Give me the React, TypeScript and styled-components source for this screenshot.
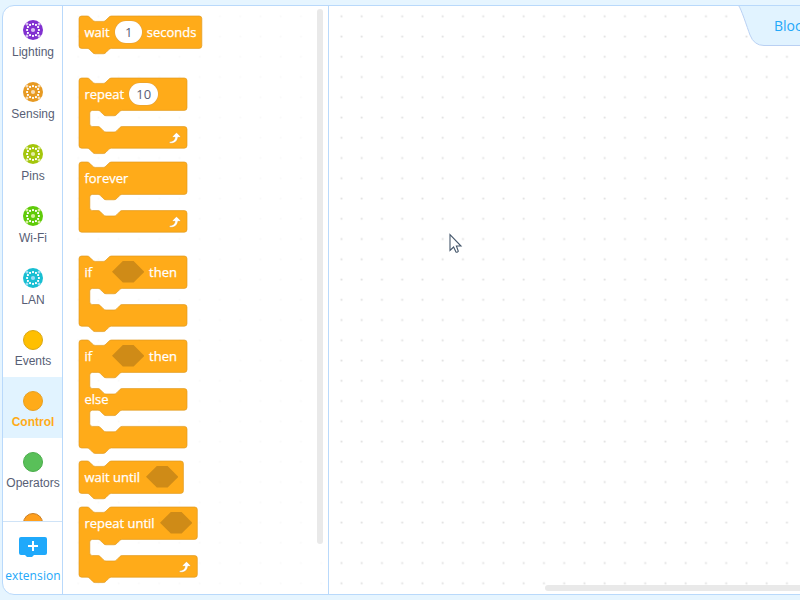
import React from 'react';
import styled, { createGlobalStyle } from 'styled-components';

const GlobalStyle = createGlobalStyle`
  * { box-sizing: border-box; }
  body { margin: 0; overflow: hidden; background: #e6f5ff; font-family: "Liberation Sans", Arial, sans-serif; }
`;

const Page = styled.div`
  width: 800px;
  height: 600px;
  padding: 5px 0 5px 2px;
  overflow: hidden;
`;

const Editor = styled.div`
  position: relative;
  display: flex;
  width: 820px;
  height: 590px;
  border: 1px solid #b9d9fb;
  border-radius: 12px;
  background: #fff;
  overflow: hidden;
`;

const Sidebar = styled.nav`
  display: flex;
  flex-direction: column;
  width: 60px;
  height: 588px;
  border-right: 1px solid #b9d9fb;
`;

const CategoryList = styled.div`
  height: 515px;
  overflow: hidden;
`;

const Category = styled.div<{ $active?: boolean; $height: number }>`
  display: flex;
  flex-direction: column;
  align-items: center;
  height: ${(p) => p.$height}px;
  padding: 14px 0 0 1px;
  font-size: 12px;
  line-height: 14px;
  white-space: nowrap;
  color: ${(p) => (p.$active ? '#ffab19' : '#575e75')};
  font-weight: ${(p) => (p.$active ? 700 : 400)};
  background: ${(p) => (p.$active ? '#e1f3ff' : 'transparent')};
`;

const Dot = styled.span<{ $color: string; $edge: string }>`
  width: 20px;
  height: 20px;
  border-radius: 50%;
  border: 1px solid ${(p) => p.$edge};
  background: ${(p) => p.$color};
`;

const CategoryLabel = styled.span<{ $top: number }>`
  margin-top: ${(p) => p.$top}px;
`;

const Extension = styled.div`
  display: flex;
  flex: 1;
  flex-direction: column;
  align-items: center;
  padding: 15px 0 0 1px;
  border-top: 1px solid #cfe3f7;
  color: #23a8f9;
  font: 12px/16px "Open Sans", "Noto Sans", sans-serif;
  letter-spacing: 0.1px;
`;

const ExtensionLabel = styled.span`
  margin-top: 11px;
`;

const Stage = styled.div`
  position: relative;
  display: flex;
  flex: 1;
`;

const DotGrid = styled.svg`
  position: absolute;
  inset: 0;
  width: 100%;
  height: 100%;
`;

const Palette = styled.section`
  position: relative;
  display: flex;
  flex-direction: column;
  align-items: flex-start;
  width: 266px;
  height: 588px;
  padding: 10px 0 0 16px;
  border-right: 1px solid #b9d9fb;
  background: rgba(255, 255, 255, 0.8);
`;

const BlockBox = styled.div<{ $gap: number; $width: number; $height: number }>`
  position: relative;
  flex: none;
  width: ${(p) => p.$width}px;
  height: ${(p) => p.$height}px;
  margin-bottom: ${(p) => p.$gap}px;
  color: #fff;
  font: 500 13px/18px "Open Sans", "Noto Sans", sans-serif;
`;

const Shape = styled.svg`
  position: absolute;
  left: 0;
  top: 0;
  overflow: visible;
`;

const BlockRow = styled.div`
  position: relative;
  display: flex;
  align-items: center;
  height: 32px;
  padding-left: 5.4px;
  white-space: nowrap;
`;

const Word = styled.span<{ $width?: number }>`
  flex: none;
  width: ${(p) => (p.$width ? `${p.$width}px` : 'auto')};
  -webkit-text-stroke: 0.25px #fff;
`;

const NumberField = styled.span<{ $width: number }>`
  display: flex;
  align-items: center;
  justify-content: center;
  flex: none;
  width: ${(p) => p.$width}px;
  height: 21.6px;
  margin-right: 4.8px;
  border-radius: 11px;
  box-shadow: 0 0 0 0.5px #e2a03a;
  background: #fff;
  color: #575e75;
  font-weight: 400;
`;

const HexSlot = styled.svg`
  flex: none;
  margin-right: 4.9px;
`;

const ElseRow = styled.div`
  position: relative;
  height: 21.6px;
  margin-top: 16.2px;
  padding: 1.6px 0 0 5.4px;
`;

const LoopArrow = styled.svg`
  position: absolute;
  right: 5px;
  bottom: 3px;
`;

const PaletteScroll = styled.div`
  position: absolute;
  right: 5px;
  top: 3px;
  width: 6px;
  height: 535px;
  border-radius: 3px;
  background: #e9e9e9;
`;

const Workspace = styled.main`
  position: relative;
  flex: 1;
`;

const WorkspaceScroll = styled.div`
  position: absolute;
  left: 216px;
  bottom: 3px;
  width: 300px;
  height: 6px;
  border-radius: 3px;
  background: #e9e9e9;
`;

const TabShape = styled.svg`
  position: absolute;
  left: 409px;
  top: -1px;
`;

const TabLabel = styled.span`
  position: absolute;
  left: 445px;
  top: 10px;
  color: #23a8f9;
  font: 14px/20px "Open Sans", "Noto Sans", sans-serif;
  white-space: nowrap;
`;

const Cursor = styled.svg`
  position: absolute;
  left: 120px;
  top: 227px;
`;

type Wheel = { label: string; color: string; tint: string };

const wheels: Wheel[] = [
  { label: 'Lighting', color: '#8130d0', tint: '#d9c0f0' },
  { label: 'Sensing', color: '#e79a22', tint: '#f8dcb5' },
  { label: 'Pins', color: '#a4c60c', tint: '#e2eda6' },
  { label: 'Wi-Fi', color: '#5fcb09', tint: '#d5ee9d' },
  { label: 'LAN', color: '#18bfd2', tint: '#9ddcf5' },
];

const discs = [
  { label: 'Events', color: '#ffbf00', edge: '#daa715' },
  { label: 'Control', color: '#ffab19', edge: '#e7a022' },
  { label: 'Operators', color: '#59c059', edge: '#4bad4b' },
  { label: '', color: '#ff9f1c', edge: '#c97d22' },
];

function WheelIcon({ color, tint }: { color: string; tint: string }) {
  const spokes = Array.from({ length: 12 }, (_, i) => (i * Math.PI) / 6);
  const corners = [1, 3, 5, 7].map((i) => (i * Math.PI) / 4);
  return (
    <svg width="20" height="20" viewBox="-10 -10 20 20">
      <circle r="10" fill={color} />
      {corners.map((a) => (
        <circle key={a} cx={8.6 * Math.cos(a)} cy={8.6 * Math.sin(a)} r="1.5" fill={tint} />
      ))}
      {spokes.map((a) => (
        <rect
          key={a}
          x={5.9 * Math.cos(a) - 0.95}
          y={5.9 * Math.sin(a) - 0.95}
          width="1.900"
          height="1.900"
          fill="#fff"
        />
      ))}
      <circle r="2.1" fill={tint} />
    </svg>
  );
}

const S = 0.675;
const NOTCH = 'c2,0 3,1 4,2 l4,4 c1,1 2,2 4,2 h12 c2,0 3,-1 4,-2 l4,-4 c1,-1 2,-2 4,-2';
const NUB = 'c-2,0 -3,1 -4,2 l-4,4 c-1,1 -2,2 -4,2 h-12 c-2,0 -3,-1 -4,-2 l-4,-4 c-1,-1 -2,-2 -4,-2';

function blockPath(width: number, mouths: number, nub: boolean) {
  let d = `M0,4 a4,4 0 0 1 4,-4 h8 ${NOTCH} H${width - 4} a4,4 0 0 1 4,4 v40 a4,4 0 0 1 -4,4`;
  for (let i = 0; i < mouths; i++) {
    d += ` H64 ${NUB} h-8 a4,4 0 0 0 -4,4 v16 a4,4 0 0 0 4,4 h8 ${NOTCH} H${width - 4} a4,4 0 0 1 4,4 v24 a4,4 0 0 1 -4,4`;
  }
  d += nub ? ` H48 ${NUB}` : '';
  return `${d} H4 a4,4 0 0 1 -4,-4 z`;
}

type BlockProps = {
  width: number;
  mouths?: number;
  nub?: boolean;
  loop?: boolean;
  gap: number;
  otherwise?: string;
  children: React.ReactNode;
};

function Block({ width, mouths = 0, nub = true, loop, gap, otherwise, children }: BlockProps) {
  const height = 48 + mouths * 56;
  return (
    <BlockBox $width={width * S} $height={height * S} $gap={gap}>
      <Shape width={width * S} height={height * S} viewBox={`0 0 ${width} ${height}`}>
        <path d={blockPath(width, mouths, nub)} fill="#ffab19" stroke="#e09a20" strokeWidth="1" />
      </Shape>
      <BlockRow>{children}</BlockRow>
      {otherwise && (
        <ElseRow>
          <Word>{otherwise}</Word>
        </ElseRow>
      )}
      {loop && (
        <LoopArrow width="14" height="14" viewBox="0 0 24 24">
          <path
            d="M3,18.5 c-1,0 -1,2 0,2.300 c5,1.200 13,-1 14,-10 h3 c1.300,0 1.600,-1 1,-1.800 l-5.500,-5.500 c-.7,-.7 -1.200,-.7 -1.900,0 l-5.500,5.500 c-.7,.8 -.3,1.800 .9,1.800 h3.200 c-.4,4.500 -4,7.500 -9.200,7.700 z"
            fill="#fff"
            stroke="#cf8b17"
            strokeWidth="0.6"
          />
        </LoopArrow>
      )}
    </BlockBox>
  );
}

function Hexagon() {
  return (
    <HexSlot width="32.4" height="21.6" viewBox="0 0 48 32">
      <path d="M16,0 H32 L48,16 L32,32 H16 L0,16 Z" fill="#cf8b17" />
    </HexSlot>
  );
}

export default function App() {
  return (
    <Page>
      <GlobalStyle />
      <Editor>
        <Sidebar>
          <CategoryList>
            {wheels.map((w) => (
              <Category key={w.label} $height={62}>
                <WheelIcon color={w.color} tint={w.tint} />
                <CategoryLabel $top={5}>{w.label}</CategoryLabel>
              </Category>
            ))}
            {discs.map((c) => (
              <Category key={c.color} $height={61} $active={c.label === 'Control'}>
                <Dot $color={c.color} $edge={c.edge} />
                {c.label && <CategoryLabel $top={4}>{c.label}</CategoryLabel>}
              </Category>
            ))}
          </CategoryList>
          <Extension>
            <svg width="28" height="20" viewBox="0 0 28 20">
              <path
                d="M2,0 H26 a2,2 0 0 1 2,2 V16 a2,2 0 0 1 -2,2 H15 l-1.500,1.500 q-.5,.5 -1,.5 h-4 q-.5,0 -1,-.5 L6,18 H2 a2,2 0 0 1 -2,-2 V2 a2,2 0 0 1 2,-2 z"
                fill="#1fa9fb"
              />
              <path d="M14,4 v10 M9,9 h10" stroke="#fff" strokeWidth="2" />
            </svg>
            <ExtensionLabel>extension</ExtensionLabel>
          </Extension>
        </Sidebar>
        <Stage>
          <DotGrid>
            <defs>
              <pattern id="dots" x="5" y="0.1" width="20.25" height="20.25" patternUnits="userSpaceOnUse">
                <rect x="9.3" y="9.3" width="1.800" height="1.800" fill="#e0e0e0" />
              </pattern>
            </defs>
            <rect width="100%" height="100%" fill="url(#dots)" />
          </DotGrid>
          <Palette>
            <Block width={182} gap={29.6}>
              <Word $width={31}>wait</Word>
              <NumberField $width={26.5}>1</NumberField>
              <Word>seconds</Word>
            </Block>
            <Block width={160} mouths={1} loop gap={13.6}>
              <Word $width={44.6}>repeat</Word>
              <NumberField $width={29.5}>10</NumberField>
            </Block>
            <Block width={160} mouths={1} nub={false} loop gap={24}>
              <Word>forever</Word>
            </Block>
            <Block width={160} mouths={1} gap={13.6}>
              <Word $width={27.4}>if</Word>
              <Hexagon />
              <Word>then</Word>
            </Block>
            <Block width={160} mouths={2} gap={13.4} otherwise="else">
              <Word $width={27.4}>if</Word>
              <Hexagon />
              <Word>then</Word>
            </Block>
            <Block width={154.7} gap={13.5}>
              <Word $width={61.4}>wait until</Word>
              <Hexagon />
            </Block>
            <Block width={175.3} mouths={1} loop gap={0}>
              <Word $width={75.4}>repeat until</Word>
              <Hexagon />
            </Block>
            <PaletteScroll />
          </Palette>
          <Workspace>
            <TabShape width="90" height="42" viewBox="0 0 90 42">
              <path
                d="M0.500,0.500 C3,3 9,22 12,30 Q16,40.500 26,40.500 H90 V0.500 Z"
                fill="#e1f3ff"
                stroke="#b9d0f3"
              />
            </TabShape>
            <TabLabel>Blocks</TabLabel>
            <Cursor width="14" height="21" viewBox="0 0 14 21">
              <path
                d="M1,1.500 V17.500 L4.600,14 L7,19 Q8.300,19.800 9.300,18.300 L7.400,13 H12 Z"
                fill="#fff"
                stroke="#46586c"
                strokeWidth="1.1"
              />
            </Cursor>
            <WorkspaceScroll />
          </Workspace>
        </Stage>
      </Editor>
    </Page>
  );
}
